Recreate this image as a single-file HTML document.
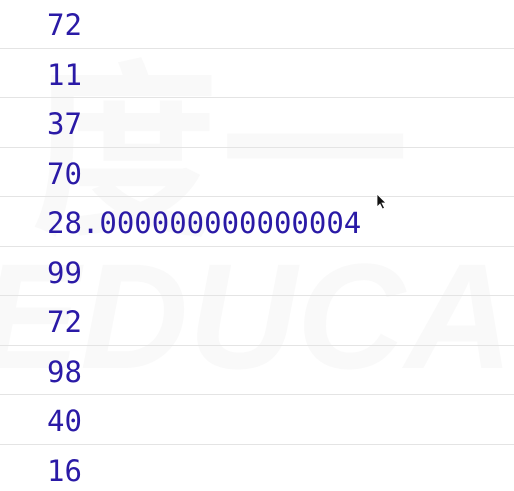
<!DOCTYPE html>
<html><head><style>
html,body{margin:0;padding:0;background:#fff;width:514px;height:491px;overflow:hidden;position:relative}
.row{position:absolute;left:0;width:514px;height:49.5px;border-bottom:1px solid #e4e4e4;box-sizing:border-box}
.t{position:absolute;left:47px;top:9px;font-family:"DejaVu Sans Mono","Liberation Mono",monospace;font-size:29px;color:#2a1aa6;line-height:34px}
.wm{position:absolute;font-family:"Liberation Sans","Noto Sans CJK SC",sans-serif;color:rgba(0,0,0,0.022);font-weight:bold}
</style></head><body>
<div class="wm" style="left:30px;top:0;font-size:190px">度一</div>
<div class="wm" style="left:-20px;top:230px;font-size:150px;font-style:italic">EDUCA</div>
<div class="row" style="top:-1px"><span class="t">72</span></div>
<div class="row" style="top:48.5px"><span class="t">11</span></div>
<div class="row" style="top:98px"><span class="t">37</span></div>
<div class="row" style="top:147.5px"><span class="t">70</span></div>
<div class="row" style="top:197px"><span class="t">28.000000000000004</span></div>
<div class="row" style="top:246.5px"><span class="t">99</span></div>
<div class="row" style="top:296px"><span class="t">72</span></div>
<div class="row" style="top:345.5px"><span class="t">98</span></div>
<div class="row" style="top:395px"><span class="t">40</span></div>
<div class="row" style="top:444.5px;border-bottom:none"><span class="t">16</span></div>
<svg style="position:absolute;left:376px;top:193px" width="12" height="18" viewBox="0 0 12 18"><path d="M1 1 L1 14 L4 11 L6.5 16 L8.5 15 L6 10 L10 10 Z" fill="#111" stroke="#fff" stroke-width="0.8"/></svg>
</body></html>
